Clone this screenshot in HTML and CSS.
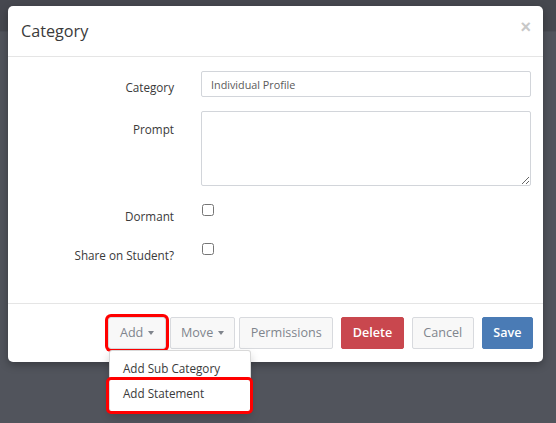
FILE: index.html
```html
<!DOCTYPE html>
<html lang="en">
<head>
<meta charset="utf-8">
<title>Category</title>
<link rel="stylesheet" href="styles.css">
</head>
<body>
<div class="backdrop">
  <div class="topbar"></div>
</div>
<div class="modal">
  <div class="modal-header">
    <h4 class="modal-title">Category</h4>
    <span class="close">&times;</span>
  </div>
  <div class="modal-body">
    <form class="form-grid">
      <label class="form-label">Category</label>
      <div class="form-field"><input class="input" type="text" value="Individual Profile"></div>
      <label class="form-label form-label-prompt">Prompt</label>
      <div class="form-field"><textarea class="input textarea"></textarea></div>
      <label class="form-label">Dormant</label>
      <div class="form-field"><input class="check" type="checkbox"></div>
      <label class="form-label">Share on Student?</label>
      <div class="form-field"><input class="check" type="checkbox"></div>
    </form>
  </div>
  <div class="modal-footer">
    <div class="btn-set">
      <div class="dropdown">
        <button class="btn btn-default btn-dd btn-marked" type="button">Add<span class="caret"></span></button>
        <ul class="dropdown-menu">
          <li class="dropdown-item">Add Sub Category</li>
          <li class="dropdown-item dropdown-item-marked">Add Statement</li>
        </ul>
      </div>
      <button class="btn btn-default btn-dd" type="button">Move<span class="caret"></span></button>
      <button class="btn btn-default" type="button">Permissions</button>
    </div>
    <button class="btn btn-danger" type="button">Delete</button>
    <button class="btn btn-default" type="button">Cancel</button>
    <button class="btn btn-primary" type="button">Save</button>
  </div>
</div>
</body>
</html>
```
FILE: styles.css
```css
html, body {
  margin: 0;
  padding: 0;
}
body {
  width: 556px;
  height: 423px;
  overflow: hidden;
  background: #51545c;
  font-family: "Open Sans", "Liberation Sans", sans-serif;
  color: #333;
}
.backdrop {
  height: 423px;
}
.topbar {
  height: 31px;
  background: #46484f;
  border-bottom: 1px solid #4c4f57;
}
.modal {
  position: absolute;
  left: 8px;
  top: 6px;
  width: 535px;
  background: #fff;
  border-radius: 5px;
  box-shadow: 0 3px 9px rgba(0, 0, 0, 0.3);
}
.modal-header {
  display: flex;
  align-items: flex-start;
  padding: 15px 12px 15px 13px;
  border-bottom: 1px solid #e5e5e5;
}
.modal-title {
  margin: 0;
  font-size: 16.2px;
  line-height: 20px;
  font-weight: 400;
  color: #3a3a3a;
}
.close {
  margin-left: auto;
  margin-top: -1px;
  font-family: "Liberation Sans", "Open Sans", sans-serif;
  font-size: 18px;
  font-weight: 700;
  line-height: 14px;
  color: #c8c8c8;
}
.modal-body {
  padding: 14px 12px 39px 15px;
}
.form-grid {
  display: grid;
  grid-template-columns: 151px 1fr;
  column-gap: 27px;
  row-gap: 14px;
  margin: 0;
}
.form-label {
  text-align: right;
  font-size: 11.7px;
  line-height: 18px;
  padding-top: 7px;
  color: #3a3a3a;
}
.form-label-prompt {
  padding-top: 9px;
}
.form-field {
  min-width: 0;
}
.input {
  display: block;
  box-sizing: border-box;
  width: 100%;
  height: 26px;
  margin: 0;
  padding: 0 9px;
  border: 1px solid #d2d5da;
  border-radius: 2px;
  background: #fff;
  font-family: "Open Sans", "Liberation Sans", sans-serif;
  font-size: 10.8px;
  color: #5a5a5a;
}
.textarea {
  height: 75px;
  padding: 6px 9px;
  resize: vertical;
}
.check {
  display: block;
  width: 12px;
  height: 12px;
  margin: 4px 0 0 1px;
}
.modal-footer {
  display: flex;
  justify-content: flex-end;
  align-items: center;
  gap: 8px;
  padding: 13px 10px 13px 13px;
  border-top: 1px solid #e5e5e5;
}
.btn-set {
  display: flex;
  gap: 4px;
}
.dropdown {
  position: relative;
  display: flex;
}
.btn {
  box-sizing: border-box;
  height: 32px;
  margin: 0;
  padding: 0 10.5px;
  border: 1px solid #d8dade;
  border-radius: 2px;
  font-family: "Open Sans", "Liberation Sans", sans-serif;
  font-size: 12.6px;
  line-height: 30px;
  white-space: nowrap;
  display: inline-flex;
  align-items: center;
}
.btn-dd {
  padding: 0 10px;
}
.btn-default {
  background: #f8f8f8;
  color: #80858d;
}
.btn-danger {
  background: #c9474e;
  border-color: #c9474e;
  color: #fff;
  font-weight: 600;
}
.btn-primary {
  background: #4a7bb5;
  border-color: #4a7bb5;
  color: #fff;
  font-weight: 600;
}
.btn-marked {
  min-width: 58px;
  padding-left: 11px;
  box-shadow: 0 0 0 3px #ff0000;
  border-radius: 3px;
}
.caret {
  display: inline-block;
  width: 0;
  height: 0;
  margin-left: 5px;
  border-top: 4px solid #80858d;
  border-left: 3.5px solid transparent;
  border-right: 3.5px solid transparent;
}
.dropdown-menu {
  position: absolute;
  top: calc(100% + 1px);
  left: 1px;
  width: 142px;
  box-sizing: border-box;
  margin: 0;
  padding: 5px 0 5px;
  list-style: none;
  background: #fff;
  border: 1px solid rgba(0, 0, 0, 0.15);
  border-radius: 3px;
  box-shadow: 0 5px 10px rgba(0, 0, 0, 0.18);
  z-index: 2;
}
.dropdown-item {
  position: relative;
  padding: 0 13px;
  font-size: 11.7px;
  line-height: 25px;
  color: #3a3a3a;
  white-space: nowrap;
}
.dropdown-item-marked::after {
  content: "";
  position: absolute;
  left: -4px;
  right: -3px;
  top: -4px;
  bottom: -8px;
  border: 3px solid #ff0000;
  border-radius: 5px;
}
```
